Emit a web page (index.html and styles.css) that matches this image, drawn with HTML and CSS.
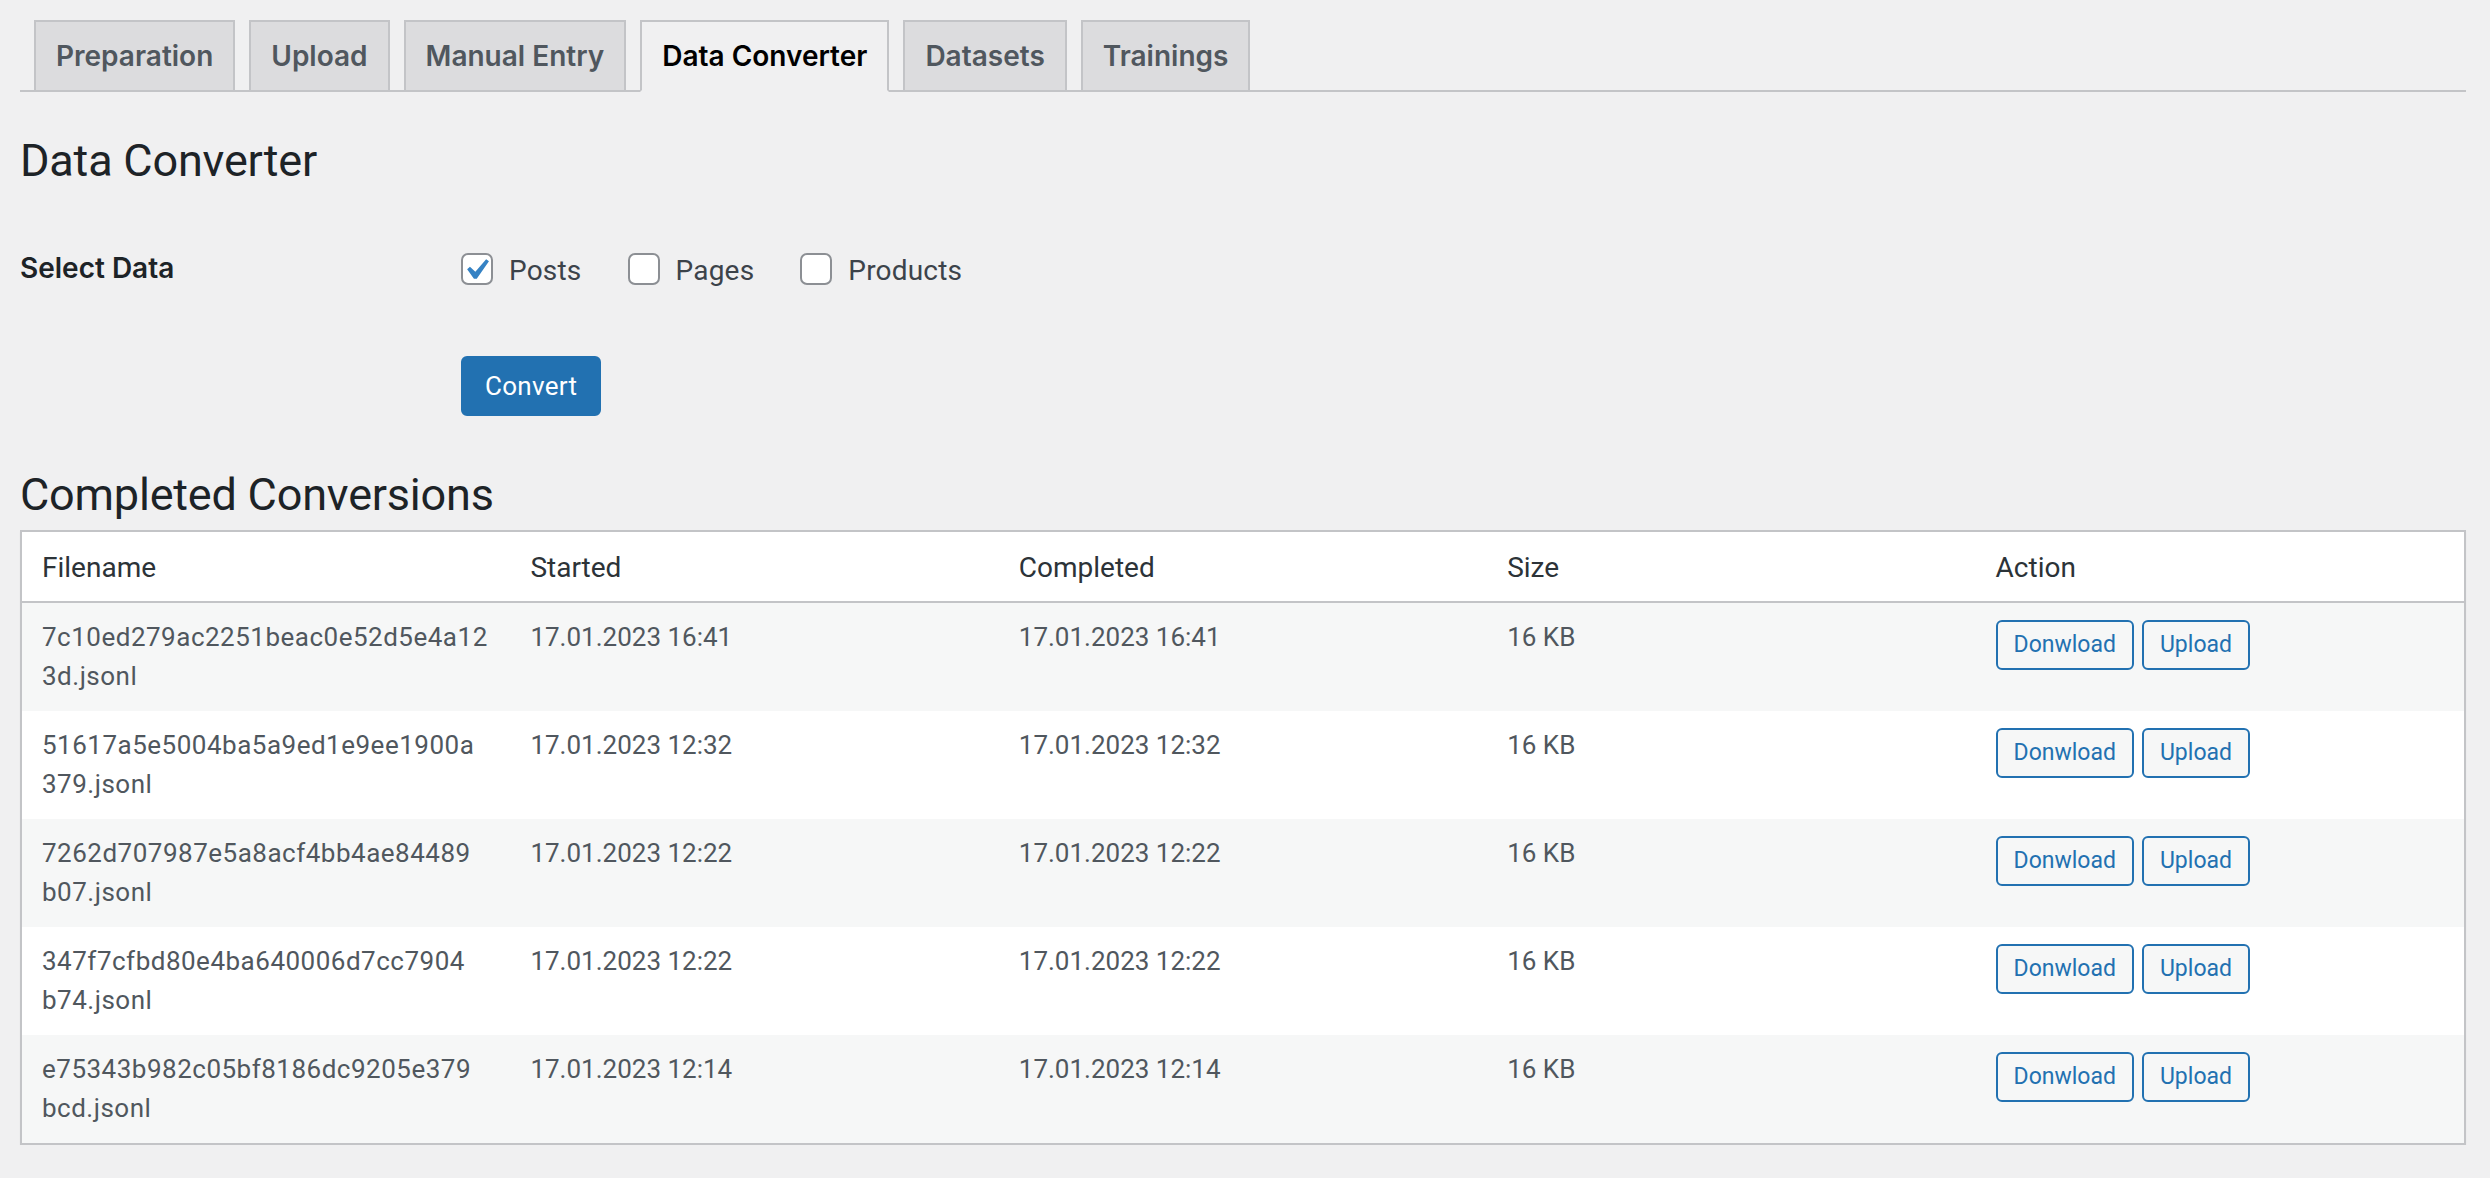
FILE: index.html
```html
<!DOCTYPE html>
<html lang="en">
<head>
<meta charset="utf-8">
<title>Data Converter</title>
<link rel="stylesheet" href="styles.css">
</head>
<body>
<div class="wrap">
  <nav class="nav-tabs">
    <a class="nav-tab">Preparation</a>
    <a class="nav-tab">Upload</a>
    <a class="nav-tab">Manual Entry</a>
    <a class="nav-tab nav-tab-active">Data Converter</a>
    <a class="nav-tab">Datasets</a>
    <a class="nav-tab">Trainings</a>
  </nav>

  <h1 class="page-title">Data Converter</h1>

  <div class="form-row">
    <div class="form-label">Select Data</div>
    <div class="form-field">
      <div class="check-list">
        <label class="check-item">
          <span class="checkbox is-checked">
            <svg class="checkmark" viewBox="0 0 20 20" width="42" height="42"><path d="M14.83 4.89l1.34.94-5.81 8.38H9.02L5.78 9.67l1.34-1.25 2.57 2.4z" fill="#3582c4"/></svg>
          </span>
          <span class="check-text">Posts</span>
        </label>
        <label class="check-item">
          <span class="checkbox"></span>
          <span class="check-text">Pages</span>
        </label>
        <label class="check-item">
          <span class="checkbox"></span>
          <span class="check-text">Products</span>
        </label>
      </div>
      <button class="btn-primary" type="button">Convert</button>
    </div>
  </div>

  <h2 class="section-title">Completed Conversions</h2>

  <table class="conversions">
    <thead>
      <tr>
        <th>Filename</th>
        <th>Started</th>
        <th>Completed</th>
        <th>Size</th>
        <th>Action</th>
      </tr>
    </thead>
    <tbody>
      <tr>
        <td class="filename">7c10ed279ac2251beac0e52d5e4a12<br>3d.jsonl</td>
        <td>17.01.2023 16:41</td>
        <td>17.01.2023 16:41</td>
        <td>16 KB</td>
        <td><div class="actions"><button class="btn-small" type="button">Donwload</button><button class="btn-small" type="button">Upload</button></div></td>
      </tr>
      <tr>
        <td class="filename">51617a5e5004ba5a9ed1e9ee1900a<br>379.jsonl</td>
        <td>17.01.2023 12:32</td>
        <td>17.01.2023 12:32</td>
        <td>16 KB</td>
        <td><div class="actions"><button class="btn-small" type="button">Donwload</button><button class="btn-small" type="button">Upload</button></div></td>
      </tr>
      <tr>
        <td class="filename">7262d707987e5a8acf4bb4ae84489<br>b07.jsonl</td>
        <td>17.01.2023 12:22</td>
        <td>17.01.2023 12:22</td>
        <td>16 KB</td>
        <td><div class="actions"><button class="btn-small" type="button">Donwload</button><button class="btn-small" type="button">Upload</button></div></td>
      </tr>
      <tr>
        <td class="filename">347f7cfbd80e4ba640006d7cc7904<br>b74.jsonl</td>
        <td>17.01.2023 12:22</td>
        <td>17.01.2023 12:22</td>
        <td>16 KB</td>
        <td><div class="actions"><button class="btn-small" type="button">Donwload</button><button class="btn-small" type="button">Upload</button></div></td>
      </tr>
      <tr>
        <td class="filename">e75343b982c05bf8186dc9205e379<br>bcd.jsonl</td>
        <td>17.01.2023 12:14</td>
        <td>17.01.2023 12:14</td>
        <td>16 KB</td>
        <td><div class="actions"><button class="btn-small" type="button">Donwload</button><button class="btn-small" type="button">Upload</button></div></td>
      </tr>
    </tbody>
  </table>
</div>
</body>
</html>
```

FILE: styles.css
```css
html, body {
  margin: 0;
  padding: 0;
  background: #f0f0f1;
}

body {
  font-family: Roboto, "Liberation Sans", sans-serif;
  color: #3c434a;
  font-size: 26px;
}

.wrap {
  padding: 0 24px 0 20px;
}

/* Tabs */
.nav-tabs {
  display: flex;
  align-items: flex-end;
  padding-top: 20px;
  border-bottom: 2px solid #c3c4c7;
}

.nav-tab {
  display: block;
  margin-left: 14px;
  margin-bottom: -2px;
  padding: 10px 20px;
  border: 2px solid #c3c4c7;
  background: #dcdcde;
  color: #50575e;
  font-family: Inter, "Noto Sans", sans-serif;
  font-weight: 600;
  font-size: 28px;
  line-height: 48px;
  white-space: nowrap;
  text-decoration: none;
}

.nav-tab-active {
  background: #f0f0f1;
  border-bottom-color: #f0f0f1;
  color: #000;
}

/* Headings */
.page-title,
.section-title {
  margin: 0;
  font-family: Roboto, "Liberation Sans", sans-serif;
  font-weight: 400;
  font-size: 45px;
  line-height: 60px;
  letter-spacing: -0.2px;
  color: #1d2327;
}

.page-title {
  margin-top: 39px;
}

.section-title {
  margin-top: 49px;
}

/* Form */
.form-row {
  display: grid;
  grid-template-columns: 441px 1fr;
  margin-top: 59px;
}

.form-label {
  font-family: Inter, "Noto Sans", sans-serif;
  font-weight: 600;
  font-size: 28px;
  line-height: 36px;
  color: #1d2327;
}

.form-field {
  display: flex;
  flex-direction: column;
  align-items: flex-start;
  gap: 70px;
}

.check-list {
  display: flex;
  align-items: center;
  gap: 46px;
  height: 36px;
}

.check-item {
  display: flex;
  align-items: center;
}

.checkbox {
  position: relative;
  display: block;
  width: 28px;
  height: 28px;
  border: 2px solid #8c8f94;
  border-radius: 7px;
  background: #fff;
  margin-right: 16px;
  margin-top: 2px;
}

.checkmark {
  position: absolute;
  top: -6px;
  left: -8px;
}

.check-text {
  font-size: 28px;
  line-height: 36px;
  color: #3c434a;
  padding-top: 6px;
  letter-spacing: 0.2px;
}

.btn-primary {
  display: block;
  height: 60px;
  padding: 0 22px;
  border: 2px solid #2271b1;
  border-radius: 6px;
  background: #2271b1;
  color: #fff;
  font-family: Roboto, "Liberation Sans", sans-serif;
  font-size: 26px;
  line-height: 56px;
  letter-spacing: 0.3px;
  cursor: pointer;
}

/* Table */
.conversions {
  width: 100%;
  margin-top: 5px;
  table-layout: fixed;
  border-collapse: separate;
  border-spacing: 0;
  border: 2px solid #c3c4c7;
  background: #fff;
  box-shadow: 0 2px 2px rgba(0, 0, 0, 0.04);
}

.conversions th {
  padding: 17px 20px 15px;
  text-align: left;
  font-weight: 400;
  font-size: 28px;
  line-height: 37px;
  color: #2c3338;
  border-bottom: 2px solid #c3c4c7;
}

.conversions td {
  padding: 15px 20px;
  vertical-align: top;
  font-size: 26px;
  line-height: 39px;
  color: #50575e;
}

.conversions td.filename {
  letter-spacing: 0.5px;
}

.conversions tbody tr:nth-child(odd) td {
  background: #f6f7f7;
}

.actions {
  display: flex;
  gap: 8px;
  padding-top: 2px;
}

.btn-small {
  display: block;
  height: 50px;
  padding: 0 16px;
  border: 2px solid #2271b1;
  border-radius: 6px;
  background: #f6f7f7;
  color: #2271b1;
  font-family: Roboto, "Liberation Sans", sans-serif;
  font-size: 23px;
  line-height: 46px;
  cursor: pointer;
}
```
